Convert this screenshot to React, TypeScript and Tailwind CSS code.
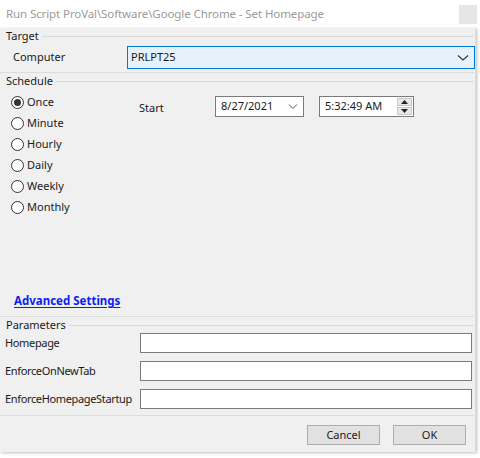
import React from "react";

const font = { fontFamily: '"Segoe UI", "Noto Sans", "Open Sans", sans-serif' };

function GroupHeader({ label }: { label: string }) {
  return (
    <div className="flex items-center h-[16px]">
      <span className="pl-[6px] pr-[3px] text-[11px] leading-[16px] text-[#1a1a1a]">{label}</span>
      <div className="flex-1 border-t border-[#dadada] mr-[1px]" />
    </div>
  );
}

function Radio({ label, checked }: { label: string; checked?: boolean }) {
  return (
    <div className="flex items-center h-[21px]">
      <div className="w-[13px] h-[13px] rounded-full border border-[#333] bg-white flex items-center justify-center ml-[11px]">
        {checked && <div className="w-[7px] h-[7px] rounded-full bg-[#333]" />}
      </div>
      <span className="ml-[3px] text-[11px] text-[#1a1a1a]">{label}</span>
    </div>
  );
}

function ParamRow({ label }: { label: string }) {
  return (
    <div className="flex items-center h-[20px]">
      <span className="w-[140px] pl-[5px] text-[11px] tracking-[-0.35px] text-[#1a1a1a] whitespace-nowrap">{label}</span>
      <div className="w-[332px] h-[20px] bg-white border border-[#7a7a7a]" />
    </div>
  );
}

export default function App() {
  return (
    <div className="w-[480px] h-[458px] bg-white relative overflow-hidden" style={font}>
      {/* title bar */}
      <div className="h-[28px] flex items-center justify-between pl-[6px] pr-[3px]">
        <span className="text-[11.5px] tracking-[-0.1px] text-[#9a9a9a]">
          Run Script ProVal\Software\Google Chrome - Set Homepage
        </span>
        <div className="w-[18px] h-[19px] bg-[#e6e6e6] mt-[1px]" />
      </div>

      {/* body */}
      <div className="w-[476px] h-[424px] bg-[#f0f0f0] border-r border-[#dcdcdc] shadow-[1px_1px_3px_rgba(0,0,0,0.25)] flex flex-col">
        <div>
          <GroupHeader label="Target" />
        </div>
        <div className="flex items-center h-[23px] mt-[2px]">
          <span className="w-[127px] pl-[13px] text-[11px] text-[#1a1a1a]">Computer</span>
          <div className="w-[348px] h-[23px] bg-[#e5f1fb] border border-[#0078d7] flex items-center justify-between px-[3px]">
            <span className="text-[11px] text-[#1a1a1a]">PRLPT25</span>
            <svg width="12" height="8" viewBox="0 0 12 8" className="mr-[2px]">
              <path d="M1 1.5 L6 6 L11 1.5" stroke="#333" strokeWidth="1.1" fill="none" />
            </svg>
          </div>
        </div>
        <div className="mt-[3px] border-t border-[#dcdcdc] mr-[1px]" />
        <div>
          <GroupHeader label="Schedule" />
        </div>
        <div className="flex mt-[3px]">
          <div className="w-[127px] flex flex-col">
            <Radio label="Once" checked />
            <Radio label="Minute" />
            <Radio label="Hourly" />
            <Radio label="Daily" />
            <Radio label="Weekly" />
            <Radio label="Monthly" />
          </div>
          <div className="flex items-start pt-[4px]">
            <span className="ml-[12px] w-[76px] text-[11px] text-[#1a1a1a] mt-[4px]">Start</span>
            <div className="w-[89px] h-[21px] bg-white border border-[#7a7a7a] flex items-center justify-between px-[5px]">
              <span className="text-[11px] text-[#1a1a1a]">8/27/2021</span>
              <svg width="10" height="7" viewBox="0 0 10 7">
                <path d="M1 1.5 L5 5.5 L9 1.5" stroke="#555" strokeWidth="1" fill="none" />
              </svg>
            </div>
            <div className="ml-[15px] w-[95px] h-[21px] bg-white border border-[#7a7a7a] flex items-center justify-between pl-[5px] pr-[1px]">
              <span className="text-[11px] text-[#1a1a1a]">5:32:49 AM</span>
              <div className="flex flex-col gap-[1px]">
                <div className="w-[15px] h-[8px] bg-[#e8e8e8] border border-[#c8c8c8] flex items-center justify-center">
                  <svg width="7" height="4" viewBox="0 0 7 4"><path d="M0 4 L3.5 0 L7 4 Z" fill="#222" /></svg>
                </div>
                <div className="w-[15px] h-[8px] bg-[#e8e8e8] border border-[#c8c8c8] flex items-center justify-center">
                  <svg width="7" height="4" viewBox="0 0 7 4"><path d="M0 0 L3.5 4 L7 0 Z" fill="#222" /></svg>
                </div>
              </div>
            </div>
          </div>
        </div>

        <div className="mt-[69px] pl-[14px] h-[18px]">
          <span className="text-[11.5px] font-bold text-[#0b1ff0] underline underline-offset-[2px]">Advanced Settings</span>
        </div>
        <div className="mt-[11px] border-t border-[#dcdcdc] mr-[1px]" />
        <div>
          <GroupHeader label="Parameters" />
        </div>
        <div className="flex flex-col gap-[8px] mt-[0px]">
          <ParamRow label="Homepage" />
          <ParamRow label="EnforceOnNewTab" />
          <ParamRow label="EnforceHomepageStartup" />
        </div>
        <div className="mt-[6px] border-t border-[#dcdcdc] mr-[1px]" />
        <div className="flex justify-end gap-[13px] pr-[9px] mt-[9px]">
          <div className="w-[73px] h-[20px] bg-[#e1e1e1] border border-[#adadad] flex items-center justify-center text-[11px] text-[#1a1a1a]">
            Cancel
          </div>
          <div className="w-[73px] h-[20px] bg-[#e1e1e1] border border-[#adadad] flex items-center justify-center text-[11px] text-[#1a1a1a]">
            OK
          </div>
        </div>
      </div>
    </div>
  );
}
